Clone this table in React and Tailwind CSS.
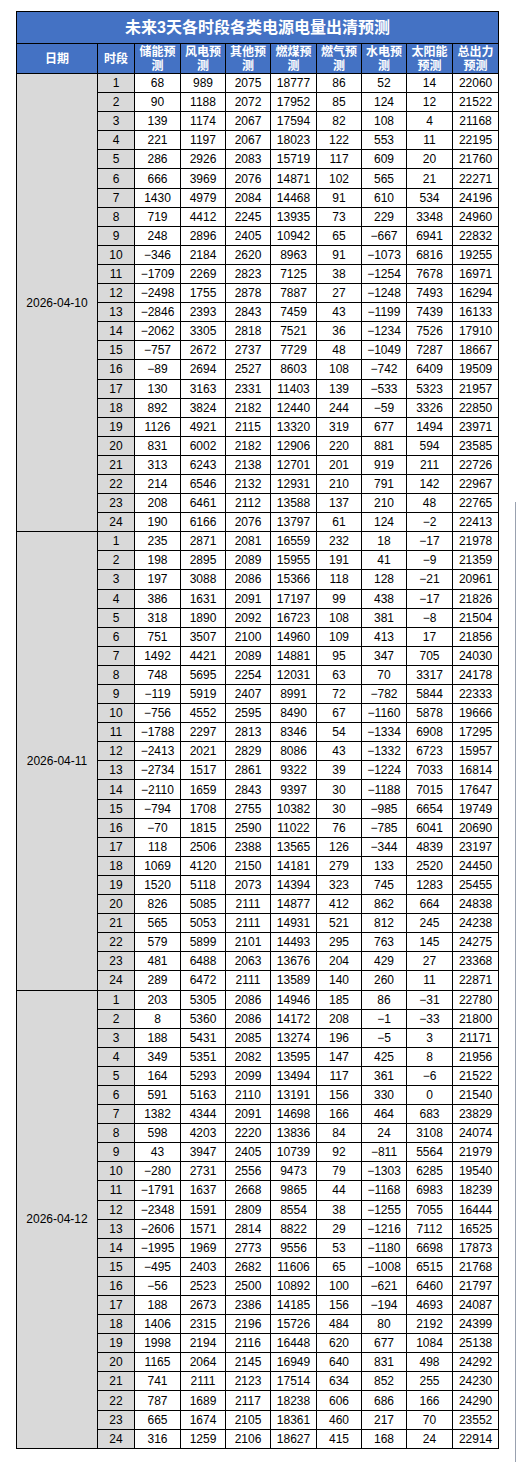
import React from 'react';

const headers = ['储能预测', '风电预测', '其他预测', '燃煤预测', '燃气预测', '水电预测', '太阳能预测', '总出力预测'];

const days = [
  {
    date: '2026-04-10',
    rows: [
      [68, 989, 2075, 18777, 86, 52, 14, 22060],
      [90, 1188, 2072, 17952, 85, 124, 12, 21522],
      [139, 1174, 2067, 17594, 82, 108, 4, 21168],
      [221, 1197, 2067, 18023, 122, 553, 11, 22195],
      [286, 2926, 2083, 15719, 117, 609, 20, 21760],
      [666, 3969, 2076, 14871, 102, 565, 21, 22271],
      [1430, 4979, 2084, 14468, 91, 610, 534, 24196],
      [719, 4412, 2245, 13935, 73, 229, 3348, 24960],
      [248, 2896, 2405, 10942, 65, -667, 6941, 22832],
      [-346, 2184, 2620, 8963, 91, -1073, 6816, 19255],
      [-1709, 2269, 2823, 7125, 38, -1254, 7678, 16971],
      [-2498, 1755, 2878, 7887, 27, -1248, 7493, 16294],
      [-2846, 2393, 2843, 7459, 43, -1199, 7439, 16133],
      [-2062, 3305, 2818, 7521, 36, -1234, 7526, 17910],
      [-757, 2672, 2737, 7729, 48, -1049, 7287, 18667],
      [-89, 2694, 2527, 8603, 108, -742, 6409, 19509],
      [130, 3163, 2331, 11403, 139, -533, 5323, 21957],
      [892, 3824, 2182, 12440, 244, -59, 3326, 22850],
      [1126, 4921, 2115, 13320, 319, 677, 1494, 23971],
      [831, 6002, 2182, 12906, 220, 881, 594, 23585],
      [313, 6243, 2138, 12701, 201, 919, 211, 22726],
      [214, 6546, 2132, 12931, 210, 791, 142, 22967],
      [208, 6461, 2112, 13588, 137, 210, 48, 22765],
      [190, 6166, 2076, 13797, 61, 124, -2, 22413],
    ],
  },
  {
    date: '2026-04-11',
    rows: [
      [235, 2871, 2081, 16559, 232, 18, -17, 21978],
      [198, 2895, 2089, 15955, 191, 41, -9, 21359],
      [197, 3088, 2086, 15366, 118, 128, -21, 20961],
      [386, 1631, 2091, 17197, 99, 438, -17, 21826],
      [318, 1890, 2092, 16723, 108, 381, -8, 21504],
      [751, 3507, 2100, 14960, 109, 413, 17, 21856],
      [1492, 4421, 2089, 14881, 95, 347, 705, 24030],
      [748, 5695, 2254, 12031, 63, 70, 3317, 24178],
      [-119, 5919, 2407, 8991, 72, -782, 5844, 22333],
      [-756, 4552, 2595, 8490, 67, -1160, 5878, 19666],
      [-1788, 2297, 2813, 8346, 54, -1334, 6908, 17295],
      [-2413, 2021, 2829, 8086, 43, -1332, 6723, 15957],
      [-2734, 1517, 2861, 9322, 39, -1224, 7033, 16814],
      [-2110, 1659, 2843, 9397, 30, -1188, 7015, 17647],
      [-794, 1708, 2755, 10382, 30, -985, 6654, 19749],
      [-70, 1815, 2590, 11022, 76, -785, 6041, 20690],
      [118, 2506, 2388, 13565, 126, -344, 4839, 23197],
      [1069, 4120, 2150, 14181, 279, 133, 2520, 24450],
      [1520, 5118, 2073, 14394, 323, 745, 1283, 25455],
      [826, 5085, 2111, 14877, 412, 862, 664, 24838],
      [565, 5053, 2111, 14931, 521, 812, 245, 24238],
      [579, 5899, 2101, 14493, 295, 763, 145, 24275],
      [481, 6488, 2063, 13676, 204, 429, 27, 23368],
      [289, 6472, 2111, 13589, 140, 260, 11, 22871],
    ],
  },
  {
    date: '2026-04-12',
    rows: [
      [203, 5305, 2086, 14946, 185, 86, -31, 22780],
      [8, 5360, 2086, 14172, 208, -1, -33, 21800],
      [188, 5431, 2085, 13274, 196, -5, 3, 21171],
      [349, 5351, 2082, 13595, 147, 425, 8, 21956],
      [164, 5293, 2099, 13494, 117, 361, -6, 21522],
      [591, 5163, 2110, 13191, 156, 330, 0, 21540],
      [1382, 4344, 2091, 14698, 166, 464, 683, 23829],
      [598, 4203, 2220, 13836, 84, 24, 3108, 24074],
      [43, 3947, 2405, 10739, 92, -811, 5564, 21979],
      [-280, 2731, 2556, 9473, 79, -1303, 6285, 19540],
      [-1791, 1637, 2668, 9865, 44, -1168, 6983, 18239],
      [-2348, 1591, 2809, 8554, 38, -1255, 7055, 16444],
      [-2606, 1571, 2814, 8822, 29, -1216, 7112, 16525],
      [-1995, 1969, 2773, 9556, 53, -1180, 6698, 17873],
      [-495, 2403, 2682, 11606, 65, -1008, 6515, 21768],
      [-56, 2523, 2500, 10892, 100, -621, 6460, 21797],
      [188, 2673, 2386, 14185, 156, -194, 4693, 24087],
      [1406, 2315, 2196, 15726, 484, 80, 2192, 24399],
      [1998, 2194, 2116, 16448, 620, 677, 1084, 25138],
      [1165, 2064, 2145, 16949, 640, 831, 498, 24292],
      [741, 2111, 2123, 17514, 634, 852, 255, 24230],
      [787, 1689, 2117, 18238, 606, 686, 166, 24290],
      [665, 1674, 2105, 18361, 460, 217, 70, 23552],
      [316, 1259, 2106, 18627, 415, 168, 24, 22914],
    ],
  },
];

const fmt = (n) => (n < 0 ? '\u2212' + Math.abs(n) : String(n));

const colWidths = ['w-[81px]', 'w-[37px]', 'w-[46px]', 'w-[45px]', 'w-[45px]', 'w-[46px]', 'w-[45px]', 'w-[45px]', 'w-[46px]', 'w-[46px]'];

export default function App() {
  return (
    <div className="flex h-[1462px] bg-white font-['Liberation_Sans','Noto_Sans_CJK_SC',sans-serif] text-black">
      <div className="pl-4 pt-[11px]">
        <table className="w-[482px] table-fixed border-collapse text-center text-[12px]">
          <colgroup>
            {colWidths.map((w, i) => (
              <col key={i} className={w} />
            ))}
          </colgroup>
          <thead>
            <tr className="h-[32px]">
              <th colSpan={10} className="border border-black bg-[#4472C4] text-[16px] font-bold text-white">
                未来3天各时段各类电源电量出清预测
              </th>
            </tr>
            <tr className="h-[30px]">
              <th className="border border-black bg-[#4472C4] text-[12px] font-bold text-white">日期</th>
              <th className="border border-black bg-[#4472C4] text-[12px] font-bold text-white">时段</th>
              {headers.map((h) => (
                <th key={h} className="border border-black bg-[#4472C4] px-[2px] text-[12px] font-bold leading-[14px] text-white">
                  {h}
                </th>
              ))}
            </tr>
          </thead>
          <tbody>
            {days.map((day) =>
              day.rows.map((row, i) => (
                <tr key={day.date + i} className="h-[19.1px]">
                  {i === 0 && (
                    <td rowSpan={24} className="border border-black bg-[#D9D9D9]">
                      {day.date}
                    </td>
                  )}
                  <td className="border border-black bg-[#D9D9D9] p-0 leading-none">{i + 1}</td>
                  {row.map((v, j) => (
                    <td key={j} className="border border-black p-0 leading-none">
                      {fmt(v)}
                    </td>
                  ))}
                </tr>
              ))
            )}
          </tbody>
        </table>
      </div>
      <div className="ml-auto mr-[1px] mt-[502px] w-px bg-gray-400" />
    </div>
  );
}
